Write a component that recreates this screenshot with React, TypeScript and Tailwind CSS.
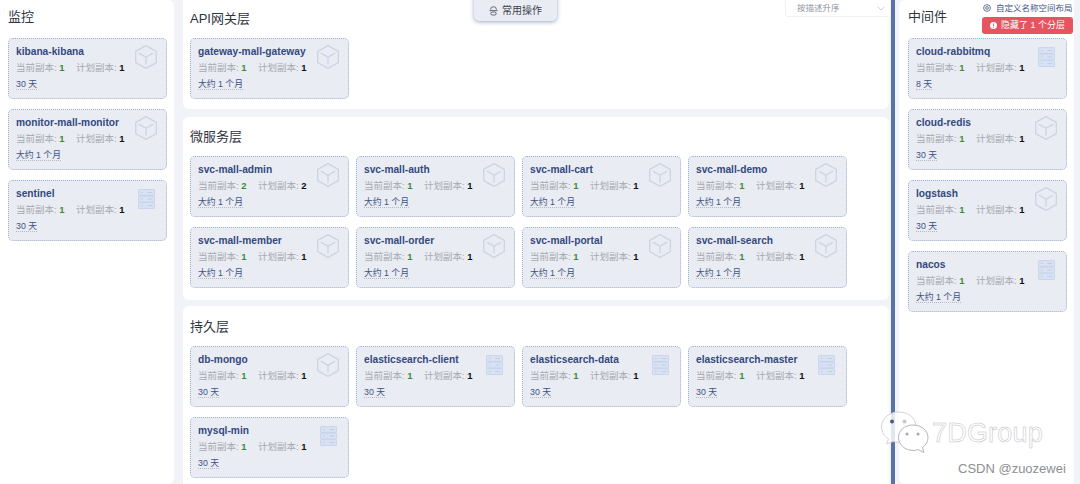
import React from "react";

const font = { fontFamily: '"Liberation Sans", "Noto Sans CJK SC", sans-serif' };

function CubeIcon() {
  return (
    <svg width="26" height="26" viewBox="0 0 24 24" fill="none" stroke="#ccd4e4" strokeWidth="1.2" strokeLinejoin="round">
      <path d="M12 1.5 L21.5 6.8 V17.2 L12 22.5 L2.5 17.2 V6.8 Z" />
      <path d="M5.8 8.6 L12 12.2 L18.2 8.6 M12 12.2 V18.5" strokeLinecap="round" />
    </svg>
  );
}

function ServerIcon() {
  return (
    <svg width="17" height="21" viewBox="0 0 18 22" fill="#d9e2f3" stroke="#c6d3ec" strokeWidth="1">
      <rect x="0.5" y="0.5" width="17" height="6.2" rx="0.8" />
      <rect x="0.5" y="7.4" width="17" height="6.2" rx="0.8" />
      <rect x="0.5" y="14.3" width="17" height="6.2" rx="0.8" />
      <path d="M3 3.6h2M10 3.6h5M3 10.5h2M10 10.5h5M3 17.4h2M10 17.4h5" stroke="#bccbe8" strokeWidth="1" />
    </svg>
  );
}

type CardData = { name: string; cur?: number; plan?: number; age: string; server?: boolean };

function Card({ name, cur = 1, plan = 1, age, server }: CardData) {
  return (
    <div className="relative h-[61px] w-[159px] shrink-0 rounded-[5px] border border-dotted border-[#9fb0d0] bg-[#e9ecf2] pl-[7px] pt-[6px]">
      <div className="text-[10.2px] font-bold leading-[14px] text-[#34497f]">{name}</div>
      <div className="mt-[2px] flex text-[9.5px] leading-[14px] text-[#a5a9b0]">
        <span className="w-[60px]">
          当前副本: <span className="font-bold text-[#3f8a37]">{cur}</span>
        </span>
        <span>
          计划副本: <span className="font-bold text-[#111111]">{plan}</span>
        </span>
      </div>
      <div className="mt-[2px] text-[8.8px] leading-[14px] text-[#3f5285]">
        <span className="border-b border-dotted border-[#b5b9c2]">{age}</span>
      </div>
      <div className={server ? "absolute right-[11px] top-[8px]" : "absolute right-[7px] top-[5px]"}>
        {server ? <ServerIcon /> : <CubeIcon />}
      </div>
    </div>
  );
}

function Title({ children }: { children: React.ReactNode }) {
  return <h2 className="text-[13px] font-normal leading-[18px] text-[#2f3540]">{children}</h2>;
}

function Section({ title, items, className }: { title: string; items: CardData[]; className: string }) {
  return (
    <section className={`shrink-0 rounded-[6px] bg-white pl-[7px] ${className}`}>
      <Title>{title}</Title>
      <div className="mt-[10px] flex w-[680px] flex-wrap gap-x-[7px] gap-y-[10px]">
        {items.map((c) => (
          <Card key={c.name} {...c} />
        ))}
      </div>
    </section>
  );
}

const month = "大约 1 个月";

export default function App() {
  return (
    <div style={font} className="relative flex h-[484px] w-[1080px] overflow-hidden bg-[#f2f3f9]">
      <aside className="h-[484px] w-[174px] shrink-0 rounded-r-[6px] bg-white pl-2 pt-[8px]">
        <Title>监控</Title>
        <div className="mt-[12px] flex flex-col gap-[10px]">
          <Card name="kibana-kibana" age="30 天" />
          <Card name="monitor-mall-monitor" age={month} />
          <Card name="sentinel" age="30 天" server />
        </div>
      </aside>

      <main className="ml-[9px] flex w-[706px] shrink-0 flex-col gap-[8px]">
        <Section
          title="API网关层"
          className="h-[109px] rounded-t-none pt-[10px]"
          items={[{ name: "gateway-mall-gateway", age: month }]}
        />
        <Section
          title="微服务层"
          className="h-[183px] pt-[11px]"
          items={[
            { name: "svc-mall-admin", cur: 2, plan: 2, age: month },
            { name: "svc-mall-auth", age: month },
            { name: "svc-mall-cart", age: month },
            { name: "svc-mall-demo", age: month },
            { name: "svc-mall-member", age: month },
            { name: "svc-mall-order", age: month },
            { name: "svc-mall-portal", age: month },
            { name: "svc-mall-search", age: month },
          ]}
        />
        <Section
          title="持久层"
          className="-mt-[2px] h-[190px] pt-[12px]"
          items={[
            { name: "db-mongo", age: "30 天" },
            { name: "elasticsearch-client", age: "30 天", server: true },
            { name: "elasticsearch-data", age: "30 天", server: true },
            { name: "elasticsearch-master", age: "30 天", server: true },
            { name: "mysql-min", age: "30 天", server: true },
          ]}
        />
      </main>

      <div className="ml-[2px] h-[484px] w-[4px] shrink-0 bg-[#5a73a6]" />

      <aside className="ml-[4px] h-[484px] w-[175px] shrink-0 rounded-l-[6px] bg-white pl-[9px] pt-[8px]">
        <Title>中间件</Title>
        <div className="mt-[12px] flex flex-col gap-[10px]">
          <Card name="cloud-rabbitmq" age="8 天" server />
          <Card name="cloud-redis" age="30 天" />
          <Card name="logstash" age="30 天" />
          <Card name="nacos" age={month} server />
        </div>
      </aside>

      {/* floating action button */}
      <div className="absolute left-[474px] top-[-8px] flex h-[29px] w-[83px] items-center justify-center gap-[4px] rounded-[5px] bg-[#e9ecf2] pt-[8px] text-[10px] text-[#3d434f] shadow-[0_1px_4px_rgba(70,100,160,0.55)]">
        <svg width="9" height="10" viewBox="0 0 9 10" fill="none" stroke="#50586a" strokeWidth="0.9">
          <path d="M1.6 3.6 A2.9 2.9 0 0 1 7.4 3.6" />
          <path d="M0.5 4.6h8" />
          <rect x="1.8" y="6" width="5.4" height="3" rx="1.5" />
        </svg>
        <span>常用操作</span>
      </div>

      {/* sort select */}
      <div className="absolute left-[785px] top-0 flex h-[17px] w-[105px] items-center justify-between rounded-b-[3px] border-b border-l border-[#eff0f3] bg-white pl-[11px] pr-[5px] text-[8.5px] text-[#8f949c]">
        <span>按描述升序</span>
        <svg width="8" height="5" viewBox="0 0 8 5" fill="none" stroke="#c9ccd2" strokeWidth="0.9">
          <path d="M0.7 0.7 L4 4 L7.3 0.7" />
        </svg>
      </div>

      {/* namespace layout link */}
      <div className="absolute left-[983px] top-[2px] flex items-center gap-[3px] text-[8.5px] leading-[12px] text-[#3f5585]">
        <svg width="8" height="8" viewBox="0 0 8 8" fill="none" stroke="#3f5585" strokeWidth="0.8">
          <circle cx="4" cy="4" r="3.4" />
          <circle cx="4" cy="4" r="1.4" />
        </svg>
        <span className="ml-[2px]">自定义名称空间布局</span>
      </div>

      {/* hidden layer badge */}
      <div className="absolute left-[982px] top-[17px] flex h-[17px] w-[91px] items-center justify-center gap-[4px] rounded-[3px] bg-[#e5545f] text-[9px] text-white">
        <svg width="7" height="7" viewBox="0 0 7 7">
          <circle cx="3.5" cy="3.5" r="3.5" fill="white" />
          <path d="M3.5 1.4v2.6M3.5 4.9v.8" stroke="#e5545f" strokeWidth="0.9" />
        </svg>
        <span>隐藏了 1 个分层</span>
      </div>

      {/* watermark */}
      <svg className="absolute left-[880px] top-[410px]" width="50" height="56" viewBox="0 0 50 56" fill="none">
        <path d="M19 2 C9 2 1.5 8.5 1.5 17 C1.5 22 4 26 8.5 29 L6.5 34 L13 31.5 C15 32 17 32.3 19 32.3 C29 32.3 36 25 36 17 C36 8.5 29 2 19 2 Z" fill="rgba(255,255,255,0.82)" stroke="#d3d4d8" strokeWidth="1" />
        <circle cx="12" cy="11.5" r="2" fill="#4a5d88" />
        <circle cx="24.5" cy="11.5" r="2" fill="#c5c7cc" />
        <path d="M33 15 C24 15 18.5 21 18.5 27.5 C18.5 34.5 25 40.5 33 40.5 C35 40.5 36.5 40.2 38 39.5 L44 42.5 L42.5 37.5 C46 35 48 31.5 48 27.5 C48 21 42 15 33 15 Z" fill="rgba(255,255,255,0.9)" stroke="#b4b5ba" strokeWidth="1" />
        <circle cx="27" cy="24" r="1.6" fill="#a9abb1" />
        <circle cx="38" cy="24" r="1.6" fill="#a9abb1" />
      </svg>
      <div className="absolute left-[932px] top-[415px] text-[27px] font-light leading-[36px] tracking-[0.2px] text-[rgba(255,255,255,0.8)] [-webkit-text-stroke:0.5px_#bdbec3]">
        7DGroup
      </div>
      <div className="absolute left-[958px] top-[461px] text-[13px] leading-[16px] text-[#8e8e92]">CSDN @zuozewei</div>
    </div>
  );
}
